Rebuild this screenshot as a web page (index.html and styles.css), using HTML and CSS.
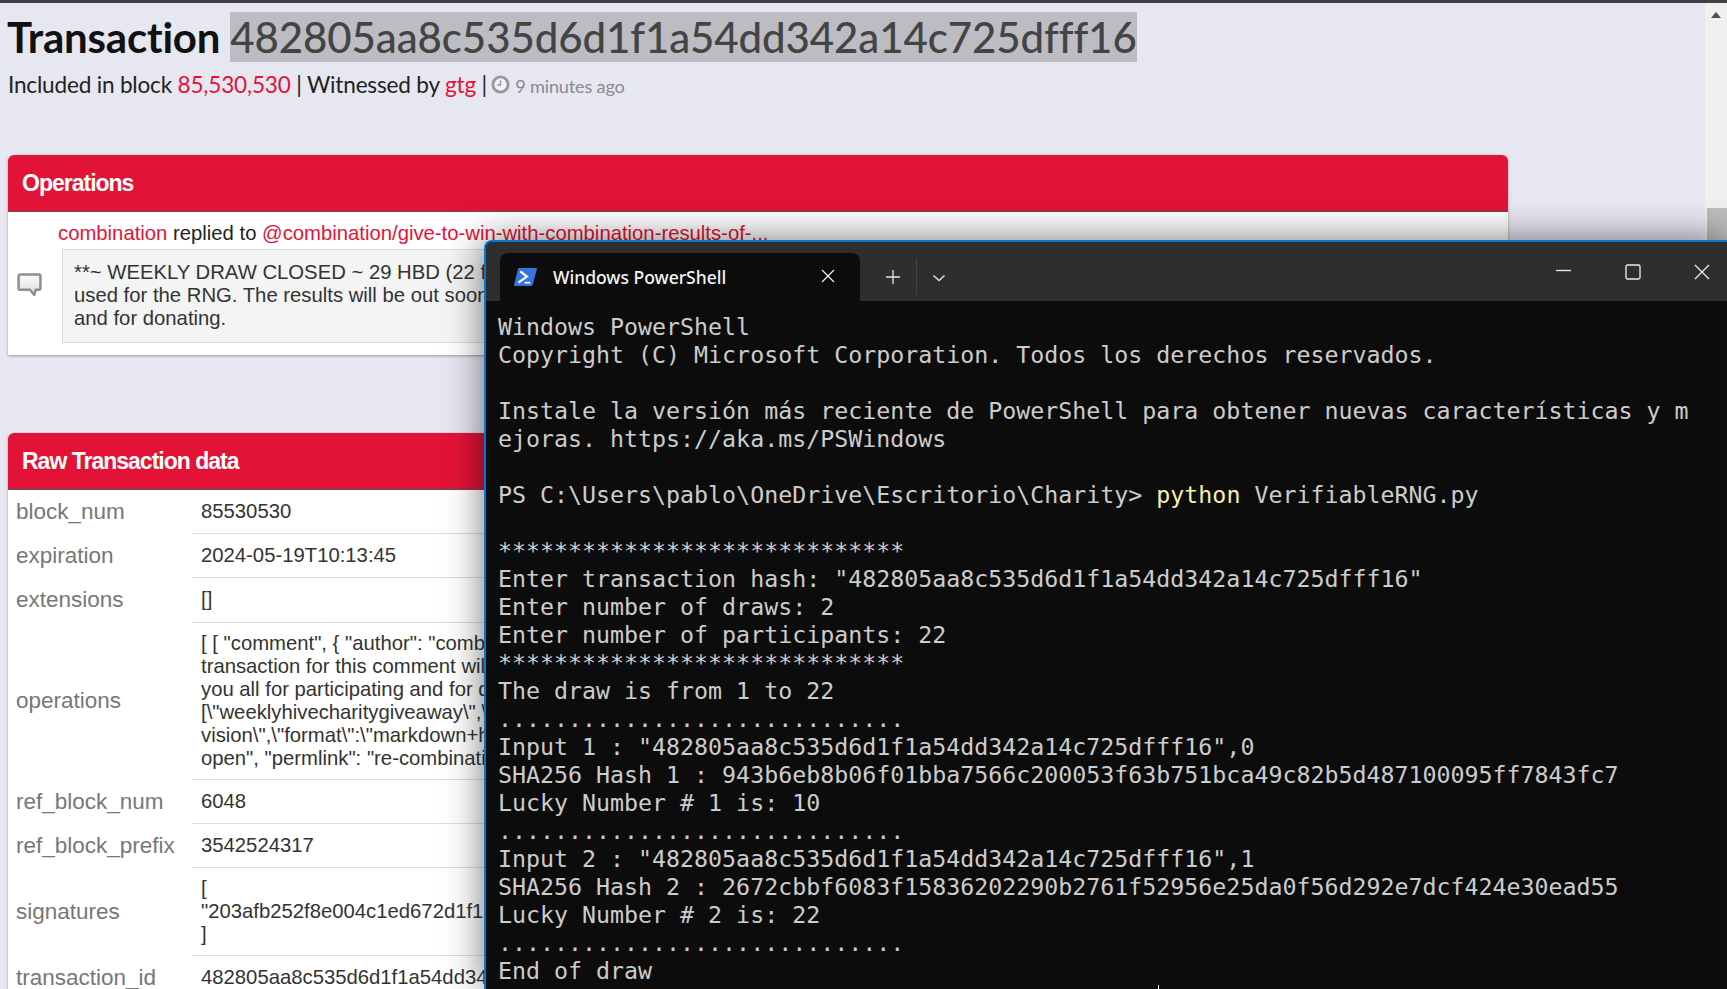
FILE: index.html
```html
<!DOCTYPE html>
<html lang="en">
<head>
<meta charset="utf-8">
<title>Transaction</title>
<link rel="stylesheet" href="styles.css">
</head>
<body>
<div class="topline"></div>
<div class="page">
  <main class="main">
    <h1 class="title">Transaction <span class="hash">482805aa8c535d6d1f1a54dd342a14c725dfff16</span></h1>
    <p class="sub">Included in block <a>85,530,530</a> | Witnessed by <a>gtg</a> | <svg class="clock" viewBox="0 0 20 20"><circle cx="10" cy="10" r="8" fill="#f2f2f4" stroke="#999" stroke-width="3"/><path d="M10 5.500v5H6.500" fill="none" stroke="#999" stroke-width="1.500"/></svg> <span class="ago">9 minutes ago</span></p>

    <section class="panel ops">
      <h2 class="panel-head">Operations</h2>
      <div class="op-body">
        <svg class="bubble" viewBox="0 0 24 22"><defs><linearGradient id="bubble-fill" x1="0" y1="0" x2="0" y2="1"><stop offset="0" stop-color="#fafafa"/><stop offset="1" stop-color="#dcdcdc"/></linearGradient></defs><path d="M3 1.500h18a1.500 1.500 0 0 1 1.500 1.500v11.500a1.500 1.500 0 0 1-1.500 1.500h-3l-1.500 5-4-5H3a1.500 1.500 0 0 1-1.500-1.500V3A1.500 1.500 0 0 1 3 1.500z" fill="url(#bubble-fill)" stroke="#8f8f8f" stroke-width="2.400"/></svg>
        <div class="op-main">
          <div class="op-line"><a>combination</a> replied to <a>@combination/give-to-win-with-combination-results-of-...</a></div>
          <div class="quote">**~ WEEKLY DRAW CLOSED ~ 29 HBD (22 full entries) ~ the hash of this<br>used for the RNG. The results will be out soon. Thank you all for participating<br>and for donating.</div>
        </div>
      </div>
    </section>

    <section class="panel raw">
      <h2 class="panel-head">Raw Transaction data</h2>
      <div class="table">
        <div class="row"><div class="key">block_num</div><div class="val"><span>85530530</span></div></div>
        <div class="row"><div class="key">expiration</div><div class="val"><span>2024-05-19T10:13:45</span></div></div>
        <div class="row"><div class="key">extensions</div><div class="val"><span>[]</span></div></div>
        <div class="row"><div class="key">operations</div><div class="val"><span>[ [ "comment", { "author": "combination", "body": "**~ WEEKLY DRAW CLOSED ~ the<br>transaction for this comment will be used for the RNG. The results will be out<br>you all for participating and for donating.", "json_metadata": "{\"tags\":<br>[\"weeklyhivecharitygiveaway\",\"hive\"],\"app\":\"peakd/2024.5.1\",\"canonical_re<br>vision\",\"format\":\"markdown+html\"}", "parent_author": "combination", "parent_<br>open", "permlink": "re-combination-give-to-win", "title": "" } ] ]</span></div></div>
        <div class="row"><div class="key">ref_block_num</div><div class="val"><span>6048</span></div></div>
        <div class="row"><div class="key">ref_block_prefix</div><div class="val"><span>3542524317</span></div></div>
        <div class="row"><div class="key">signatures</div><div class="val"><span>[<br>"203afb252f8e004c1ed672d1f1c0a57b2e"<br>]</span></div></div>
        <div class="row"><div class="key">transaction_id</div><div class="val"><span>482805aa8c535d6d1f1a54dd342a14c725dfff16</span></div></div>
      </div>
    </section>
  </main>
  <aside class="scrollbar">
    <div class="arrow"></div>
    <div class="thumb"></div>
  </aside>
</div>

<div class="terminal">
  <header class="term-bar">
    <div class="tab">
      <svg class="ps-icon" viewBox="0 0 24 19"><path d="M5 0h18a1 1 0 0 1 1 1.300L19.500 18a1.300 1.300 0 0 1-1.300 1H1a1 1 0 0 1-1-1.300L4 1a1.300 1.300 0 0 1 1-1z" fill="#3574dc"/><path d="M6.500 3.500l7 5.500-9 6.500" fill="none" stroke="#fff" stroke-width="2.300"/><path d="M11 15.500h6" stroke="#fff" stroke-width="1.800"/></svg>
      <span class="tab-title">Windows PowerShell</span>
      <svg class="tab-close" viewBox="0 0 14 14"><path d="M1 1l12 12M13 1L1 13" stroke="#f2f2f2" stroke-width="1.200"/></svg>
    </div>
    <svg class="plus" viewBox="0 0 16 16"><path d="M8 1v14M1 8h14" stroke="#e8e8e8" stroke-width="1.300"/></svg>
    <div class="sep"></div>
    <svg class="chev" viewBox="0 0 14 8"><path d="M1.500 1.500L7 6.500l5.500-5" fill="none" stroke="#e8e8e8" stroke-width="1.300"/></svg>
    <div class="win-ctrls">
      <svg class="win-btn" viewBox="0 0 16 16"><path d="M0 6.500h15" stroke="#eee" stroke-width="1.300"/></svg>
      <svg class="win-btn" viewBox="0 0 16 16"><rect x="1" y="1" width="14" height="14" rx="1.500" fill="none" stroke="#eee" stroke-width="1.300"/></svg>
      <svg class="win-btn" viewBox="0 0 16 16"><path d="M1 1l14 14M15 1L1 15" stroke="#eee" stroke-width="1.300"/></svg>
    </div>
  </header>
<pre class="console">Windows PowerShell
Copyright (C) Microsoft Corporation. Todos los derechos reservados.

Instale la versión más reciente de PowerShell para obtener nuevas características y m
ejoras. https://aka.ms/PSWindows

PS C:\Users\pablo\OneDrive\Escritorio\Charity&gt; <span class="cmd">python</span> VerifiableRNG.py

*****************************
Enter transaction hash: "482805aa8c535d6d1f1a54dd342a14c725dfff16"
Enter number of draws: 2
Enter number of participants: 22
*****************************
The draw is from 1 to 22
.............................
Input 1 : "482805aa8c535d6d1f1a54dd342a14c725dfff16",0
SHA256 Hash 1 : 943b6eb8b06f01bba7566c200053f63b751bca49c82b5d487100095ff7843fc7
Lucky Number # 1 is: 10
.............................
Input 2 : "482805aa8c535d6d1f1a54dd342a14c725dfff16",1
SHA256 Hash 2 : 2672cbbf6083f15836202290b2761f52956e25da0f56d292e7dcf424e30ead55
Lucky Number # 2 is: 22
.............................
End of draw
PS C:\Users\pablo\OneDrive\Escritorio\Charity&gt; <span class="cursor"></span></pre>
</div>
</body>
</html>
```
FILE: styles.css
```css
html, body {
  margin: 0;
  height: 100%;
  overflow: hidden;
  background: #e6e7f1;
  font-family: "Liberation Sans", Arial, sans-serif;
}
.topline { height: 3px; background: #3f3f41; }
.page { display: flex; height: 986px; }
.main { flex: 1; min-width: 0; padding-left: 8px; overflow: hidden; }
.scrollbar { width: 22px; background: #f0f0f0; display: flex; flex-direction: column; align-items: flex-end; }
.arrow { align-self: center; margin-top: 9px; width: 0; height: 0; border: 5.500px solid transparent; border-top: 0; border-bottom: 6px solid #505050; }
.thumb { width: 20px; height: 120px; margin-top: 190px; background: #bdbdbd; }

.title { margin: 9px 0 0 -1px; font: 700 42px/50px Lato, sans-serif; color: #111; white-space: nowrap; letter-spacing: -0.2px; }
.hash { background: #bcbcc2; color: #444; font-weight: 500; letter-spacing: -0.1px; }
.sub { margin: 8px 0 0; font: 22.600px/30px Lato, sans-serif; color: #222; white-space: nowrap; letter-spacing: -0.2px; }
.sub a { color: #e31337; }
.clock { width: 19px; height: 19px; vertical-align: -1px; margin-left: -2px; }
.ago { font-size: 18.200px; color: #8a8a8a; }

.panel { width: 1500px; background: #fff; border-radius: 6px 6px 0 0; box-shadow: 0 1px 3px rgba(0, 0, 0, .35); }
.ops { margin-top: 54px; }
.raw { margin-top: 78px; }
.panel-head { margin: 0; background: #e31337; color: #fff; font-size: 23px; font-weight: 700; letter-spacing: -1px; border-radius: 6px 6px 0 0; border-bottom: 1px solid #555; box-sizing: border-box; height: 57px; display: flex; align-items: center; padding-left: 14px; }

.op-body { display: flex; align-items: center; height: 143px; box-sizing: border-box; font-size: 20.300px; color: #222; }
.bubble { width: 25px; height: 23px; margin: 2px 12px 0 9px; flex: none; }
.op-main { flex: 1; min-width: 0; padding-left: 4px; }
.op-line { line-height: 24px; margin-top: -4px; white-space: nowrap; }
.op-line a { color: #e31337; }
.quote { margin: 4px 14px 0 4px; padding: 11px 11px 10px; background: #f4f4f4; border: 1px solid #ddd; line-height: 23px; white-space: nowrap; color: #333; height: 94px; box-sizing: border-box; }

.row { display: flex; min-height: 44.200px; }
.key { width: 184px; padding-left: 8px; box-sizing: border-box; flex: none; display: flex; align-items: center; font-size: 22.500px; color: #777; white-space: nowrap; }
.val { flex: 1; padding: 9px; display: flex; align-items: center; border-bottom: 1px solid #ddd; font-size: 20.300px; line-height: 23px; color: #333; white-space: nowrap; box-sizing: border-box; }

.terminal { position: absolute; left: 484px; top: 240px; width: 1243px; height: 749px; background: #0c0c0c; border-top: 2px solid #0078d4; border-left: 2px solid #0078d4; border-radius: 8px 0 0 0; box-shadow: 0 0 38px rgba(0, 0, 0, .55); overflow: hidden; box-sizing: border-box; }
.term-bar { height: 59px; background: #2e2e2e; display: flex; align-items: flex-start; position: relative; }
.tab { margin: 11px 0 0 14px; width: 360px; height: 48px; background: #0c0c0c; border-radius: 8px 8px 0 0; display: flex; align-items: center; box-sizing: border-box; padding: 0 14px; }
.ps-icon { width: 23px; height: 18px; flex: none; margin-top: -1px; }
.tab-title { margin-left: 16px; font: 500 17.500px/24px "Noto Sans", "Open Sans", sans-serif; color: #f5f5f5; }
.tab-close { width: 14px; height: 14px; margin-left: auto; margin-right: 11px; margin-top: -2px; }
.plus { width: 16px; height: 16px; margin: 27px 0 0 25px; }
.sep { width: 1px; height: 36px; background: #444; margin: 17px 0 0 15px; }
.chev { width: 14px; height: 8px; margin: 32px 0 0 15px; }
.win-ctrls { margin-left: auto; display: flex; gap: 53px; margin-top: 22px; margin-right: 17px; }
.win-btn { width: 16px; height: 16px; }
.console { margin: 0; padding: 12px 0 0 12px; font: 23.270px/28px "DejaVu Sans Mono", monospace; color: #cccccc; white-space: pre; }
.cmd { color: #f9f1a5; }
.cursor { display: inline-block; width: 1px; height: 24px; background: #fff; margin-left: 2px; }
```
